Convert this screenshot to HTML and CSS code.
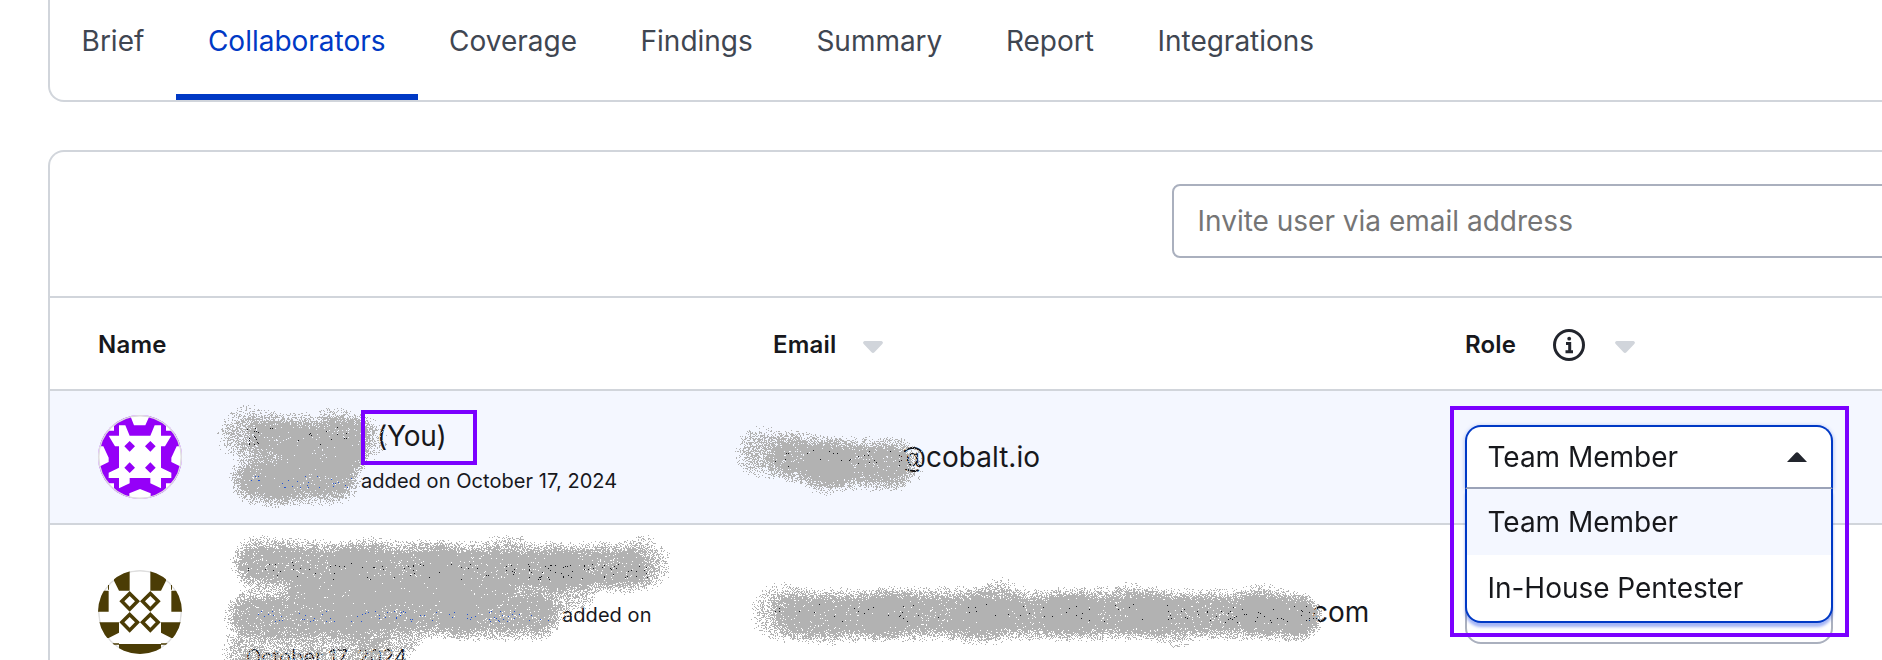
FILE: index.html
```html
<!DOCTYPE html>
<html lang="en">
<head>
<meta charset="utf-8">
<title>Collaborators</title>
<link rel="stylesheet" href="styles.css">
</head>
<body>
<nav class="tabs">
  <a class="tab">Brief</a>
  <a class="tab tab-active">Collaborators</a>
  <a class="tab">Coverage</a>
  <a class="tab">Findings</a>
  <a class="tab">Summary</a>
  <a class="tab">Report</a>
  <a class="tab">Integrations</a>
</nav>

<main class="card">
  <div class="toolbar">
    <input class="invite" type="text" placeholder="Invite user via email address">
  </div>

  <div class="row head">
    <div class="cell">Name</div>
    <div class="cell">Email
      <svg class="sort sort-email" viewBox="0 0 20 12"><path d="M1.5 0h17q2.4 1 .8 3l-7.600 8q-1.700 1.800-3.400 0L.7 3Q-.9 1 1.500 0z"/></svg>
    </div>
    <div class="cell">Role
      <svg class="info" viewBox="0 0 32 32"><circle cx="16" cy="16" r="14.500"/><circle class="info-dot" cx="16.200" cy="9.700" r="1.900"/><path d="M13 14.500h3.700v8M12.500 22.800h7.500"/></svg>
      <svg class="sort" viewBox="0 0 20 12"><path d="M1.5 0h17q2.4 1 .8 3l-7.600 8q-1.700 1.800-3.400 0L.7 3Q-.9 1 1.500 0z"/></svg>
    </div>
  </div>

  <div class="row current">
    <div class="cell person">
      <svg class="avatar" viewBox="54 75 252 252">
        <clipPath id="c1"><circle cx="180" cy="201" r="126"/></clipPath>
        <g clip-path="url(#c1)">
          <path fill="#9500f8" d="M54 75h252v252H54z"/>
          <path fill="#fff" d="M148 70h64l-16 36h-34zM50 169h20l16 34v13l-36 18zM310 169h-20l-16 34v13l36 18zM148 330v-20l32-13 32 13v20zM54 75h48v47H54zM258 75h48v47h-48zM54 280h48v47H54zM258 280h48v47h-48z"/>
          <path fill="#fff" d="M117 106h19l13 31h62l13-31h19v31h31l-19 32h-12v64l31 15v16h-31v31l-32-15v-16h-62v16l-32 15v-31H86v-16l31-15v-64h-12l-19-32h31z"/>
          <path fill="#9500f8" d="M149 153l16 16-16 16-16-16zM211 153l16 16-16 16-16-16zM149 217l16 16-16 16-16-16zM211 217l16 16-16 16-16-16z"/>
          <circle class="ring" cx="180" cy="201" r="124"/>
        </g>
      </svg>
      <div class="who">
        <div class="name"><span class="gap gap-name"></span>(You)<span class="mark mark-you"></span></div>
        <div class="meta"><span class="gap gap-by"></span>added on October 17, 2024</div>
      </div>
    </div>
    <div class="cell"><span class="gap gap-mail"></span>@cobalt.io</div>
    <div class="cell role">
      <div class="select">
        <div class="select-value">Team Member
          <svg class="caret" viewBox="0 0 20 10"><path d="M0 10L8.500 1q1.500-1.600 3 0L20 10z"/></svg>
        </div>
        <div class="options">
          <div class="option option-on">Team Member</div>
          <div class="option">In-House Pentester</div>
        </div>
      </div>
      <span class="mark mark-role"></span>
    </div>
  </div>

  <div class="row">
    <div class="cell person">
      <svg class="avatar" viewBox="54 540 252 252">
        <clipPath id="c2"><circle cx="180" cy="666" r="126"/></clipPath>
        <g clip-path="url(#c2)">
          <path fill="#fff" d="M54 540h252v252H54z"/>
          <circle class="ring" cx="180" cy="666" r="124"/>
          <path fill="#4b3c05" d="M102 540h47v62h-32l-15-30zM258 540h-47v62h32l15-30zM54 602h32v63H54zM274 602h32v63h-32zM54 697h63v31l-31 16H54zM306 697h-63v31l31 16h32zM117 762h126v30H117zM84 585h3v14h-3zM273 585h3v14h-3zM98 760h19v4H98zM243 760h19v4h-19z"/>
          <path fill="#4b3c05" fill-rule="evenodd" d="M149 603l31 31-31 31-31-31zM149 618l-16 16 16 16 16-16zM211 603l31 31-31 31-31-31zM211 618l-16 16 16 16 16-16zM149 666l31 31-31 31-31-31zM149 681l-16 16 16 16 16-16zM211 666l31 31-31 31-31-31zM211 681l-16 16 16 16 16-16z"/>
        </g>
      </svg>
      <div class="who">
        <div class="name">&nbsp;</div>
        <div class="meta"><span class="gap gap-by2"></span>added on</div>
        <div class="meta">October 17, 2024</div>
      </div>
    </div>
    <div class="cell"><span class="gap gap-mail2"></span>.com</div>
    <div class="cell role"><div class="select select-closed"></div></div>
  </div>
</main>
<canvas class="spray" width="1882" height="660"></canvas>
<script src="spray.js"></script>
</body>
</html>
```

FILE: styles.css
```css
* { box-sizing: border-box; }
html, body { height: 660px; overflow: hidden; }
body {
  position: relative;
  margin: 0;
  padding-left: 48px;
  background: #fff;
  color: #17181c;
  font: 28px/42px Inter, "Liberation Sans", sans-serif;
}

.tabs {
  display: flex;
  width: 1900px;
  height: 102px;
  border: solid #d1d5db;
  border-width: 0 2px 2px;
  border-radius: 0 0 16px 16px;
  color: #3f4651;
}
.tab { padding: 20px 32px 0 31.6px; white-space: nowrap; letter-spacing: -.01px; }
.tab-active { color: #0039c5; border-bottom: 6px solid #0039c5; }

.card {
  width: 1900px;
  height: 510px;
  margin-top: 48px;
  overflow: hidden;
  border: 2px solid #d1d5db;
  border-bottom: 0;
  border-radius: 16px 16px 0 0;
}
.toolbar {
  display: flex;
  height: 146px;
  padding: 32px 0 0 1122px;
  border-bottom: 2px solid #d1d5db;
}
.invite {
  width: 800px;
  height: 74px;
  padding: 0 24px 0 23.5px;
  border: 2px solid #aab0be;
  border-radius: 8px;
  font: inherit;
}
.invite::placeholder { color: #757575; opacity: 1; }

.row {
  display: grid;
  grid-template-columns: 675px 692px 1fr;
  align-items: center;
  height: 176px;
  padding-left: 48px;
  border-bottom: 2px solid #d1d5db;
}
.cell { display: flex; align-items: center; white-space: nowrap; }
.head { height: 93px; padding-top: 2px; font-size: 24px; font-weight: 600; letter-spacing: .2px; }
.current { height: 134px; background: #f4f7ff; }

.sort { width: 20px; height: 12px; margin: 4px 0 0 30px; fill: #d1d5db; }
.sort-email { margin-left: 26.5px; }
.info { width: 32px; height: 32px; margin-left: 36.6px; fill: none; stroke: #22252d; stroke-width: 3; }
.info-dot { fill: #22252d; stroke: none; }

.avatar { width: 84px; height: 84px; }
.ring { fill: none; stroke: #dedede; stroke-width: 5; }
.who { margin-left: 64px; }
.name { position: relative; letter-spacing: -.2px; }
.meta { height: 42px; font-size: 20px; line-height: 48px; letter-spacing: .06px; }
.gap { display: inline-block; height: 1px; }
.gap-name { width: 131px; }
.gap-by { width: 115px; }
.gap-by2 { width: 316px; }
.gap-mail { width: 126px; }
.gap-mail2 { width: 531px; }

.role { position: relative; height: 64px; }
.select {
  position: relative;
  z-index: 3;
  width: 368px;
  height: 64px;
  border: 2px solid #0039c5;
  border-bottom-color: #9ba3b8;
  border-radius: 16px 16px 0 0;
  background: #fff;
  box-shadow: 0 1px 4px rgba(0, 57, 220, .35);
  letter-spacing: -.03px;
}
.select-value {
  display: flex;
  align-items: center;
  justify-content: space-between;
  height: 60px;
  padding: 0 24px 0 20.5px;
}
.caret { width: 20px; height: 10px; fill: #22252d; }
.options {
  position: absolute;
  top: 62px;
  left: -2px;
  width: 368px;
  height: 134px;
  overflow: hidden;
  border: 2px solid #0039c5;
  border-top: 0;
  border-radius: 0 0 16px 16px;
  background: #fff;
  box-shadow: 0 4px 3px rgba(30, 70, 230, .4);
}
.option { height: 66px; padding: 12px 20.5px 0; }
.option-on { background: #f4f7ff; }
.select-closed { z-index: 0; border-color: #aab0be; border-radius: 16px; box-shadow: none; }

/* Highlight frames and the spray layer lie over the table. */
.mark { position: absolute; z-index: 4; border: 4px solid #7b00ff; }
.mark-you { left: 115px; top: -5px; width: 116px; height: 55px; }
.mark-role { left: -15px; top: -19px; width: 399px; height: 231px; }
.spray { position: absolute; left: 0; top: 0; z-index: 2; pointer-events: none; }
```

FILE: spray.js
```js
const canvas = document.querySelector('.spray');
const ctx = canvas.getContext('2d');

let seed = 4171;
function rand() {
  seed = (seed * 1664525 + 1013904223) >>> 0;
  return seed / 4294967296;
}

// Each stroke: x1, y1, x2, y2, radius, optional strength.
const strokes = [
  [246, 435, 248, 433, 30, 0.6], [270, 437, 300, 439, 28], [333, 435, 348, 438, 29], [360, 438, 364, 440, 24, 0.4],
  [256, 478, 280, 480, 28], [280, 478, 334, 478, 28], [300, 455, 345, 457, 24],

  [258, 563, 350, 569, 29], [350, 568, 440, 567, 29], [367, 562, 370, 562, 28, 0.6],
  [505, 557, 512, 558, 26, 0.5], [440, 568, 560, 570, 29], [560, 568, 630, 567, 27], [640, 560, 645, 564, 27, 0.5],
  [252, 615, 350, 614, 29], [350, 612, 460, 611, 29], [460, 612, 535, 613, 29], [300, 590, 500, 590, 18],
  [550, 600, 575, 592, 23, 0.5], [250, 650, 365, 648, 30, 0.6], [370, 640, 400, 636, 25, 0.5],

  [760, 452, 768, 453, 27, 0.6], [790, 456, 830, 464, 28], [822, 467, 828, 468, 28, 0.65],
  [830, 463, 889, 464, 28], [892, 463, 897, 463, 28, 0.4],

  [780, 612, 785, 612, 31, 0.55], [797, 614, 880, 615, 28], [820, 619, 825, 619, 28, 0.55],
  [880, 614, 980, 613, 28], [895, 612, 900, 612, 27, 0.7], [980, 615, 1080, 614, 26],
  [998, 603, 1005, 605, 27, 0.6], [970, 621, 990, 621, 26, 0.55], [1060, 614, 1150, 613, 28],
  [1130, 608, 1134, 609, 28, 0.5], [1150, 614, 1260, 614, 27], [1170, 620, 1176, 620, 28, 0.5],
  [1258, 609, 1268, 610, 28, 0.5], [1260, 614, 1296, 616, 26], [1292, 617, 1298, 617, 25]
];

function distance(x, y, s) {
  const dx = s[2] - s[0], dy = s[3] - s[1];
  const t = Math.max(0, Math.min(1, ((x - s[0]) * dx + (y - s[1]) * dy) / (dx * dx + dy * dy)));
  return Math.hypot(x - s[0] - t * dx, y - s[1] - t * dy);
}

ctx.fillStyle = '#b2b2b2';
for (let y = 400; y < 660; y++) {
  for (let x = 215; x < 1335; x++) {
    let open = 1;
    for (const s of strokes) {
      const d = distance(x, y, s) / s[4];
      if (d < 1) open *= 1 - Math.min(1, (1 - d) * 2) * 0.94 * (s[5] || 1);
    }
    if (open < 1 && rand() < 1 - open) ctx.fillRect(x, y, 1, 1);
  }
}

// Specks of the covered text: x, y, width, height, count, colour.
const specks = [
  [247, 427, 12, 18, 16, '#17181c'], [259, 427, 88, 18, 14, '#17181c'],
  [247, 476, 106, 12, 26, '#2354cf'],
  [248, 562, 120, 18, 24, '#17181c'], [368, 564, 160, 16, 32, '#17181c'], [528, 564, 122, 16, 60, '#17181c'],
  [250, 611, 300, 11, 76, '#2354cf'],
  [775, 450, 125, 17, 26, '#17181c'],
  [775, 604, 430, 18, 62, '#17181c'], [1205, 606, 110, 17, 40, '#17181c']
];
for (const [x, y, w, h, n, colour] of specks) {
  ctx.fillStyle = colour;
  for (let i = 0; i < n; i++) {
    ctx.fillRect(x + Math.floor(rand() * w), y + Math.floor(rand() * h), 1, 1);
  }
}
```
